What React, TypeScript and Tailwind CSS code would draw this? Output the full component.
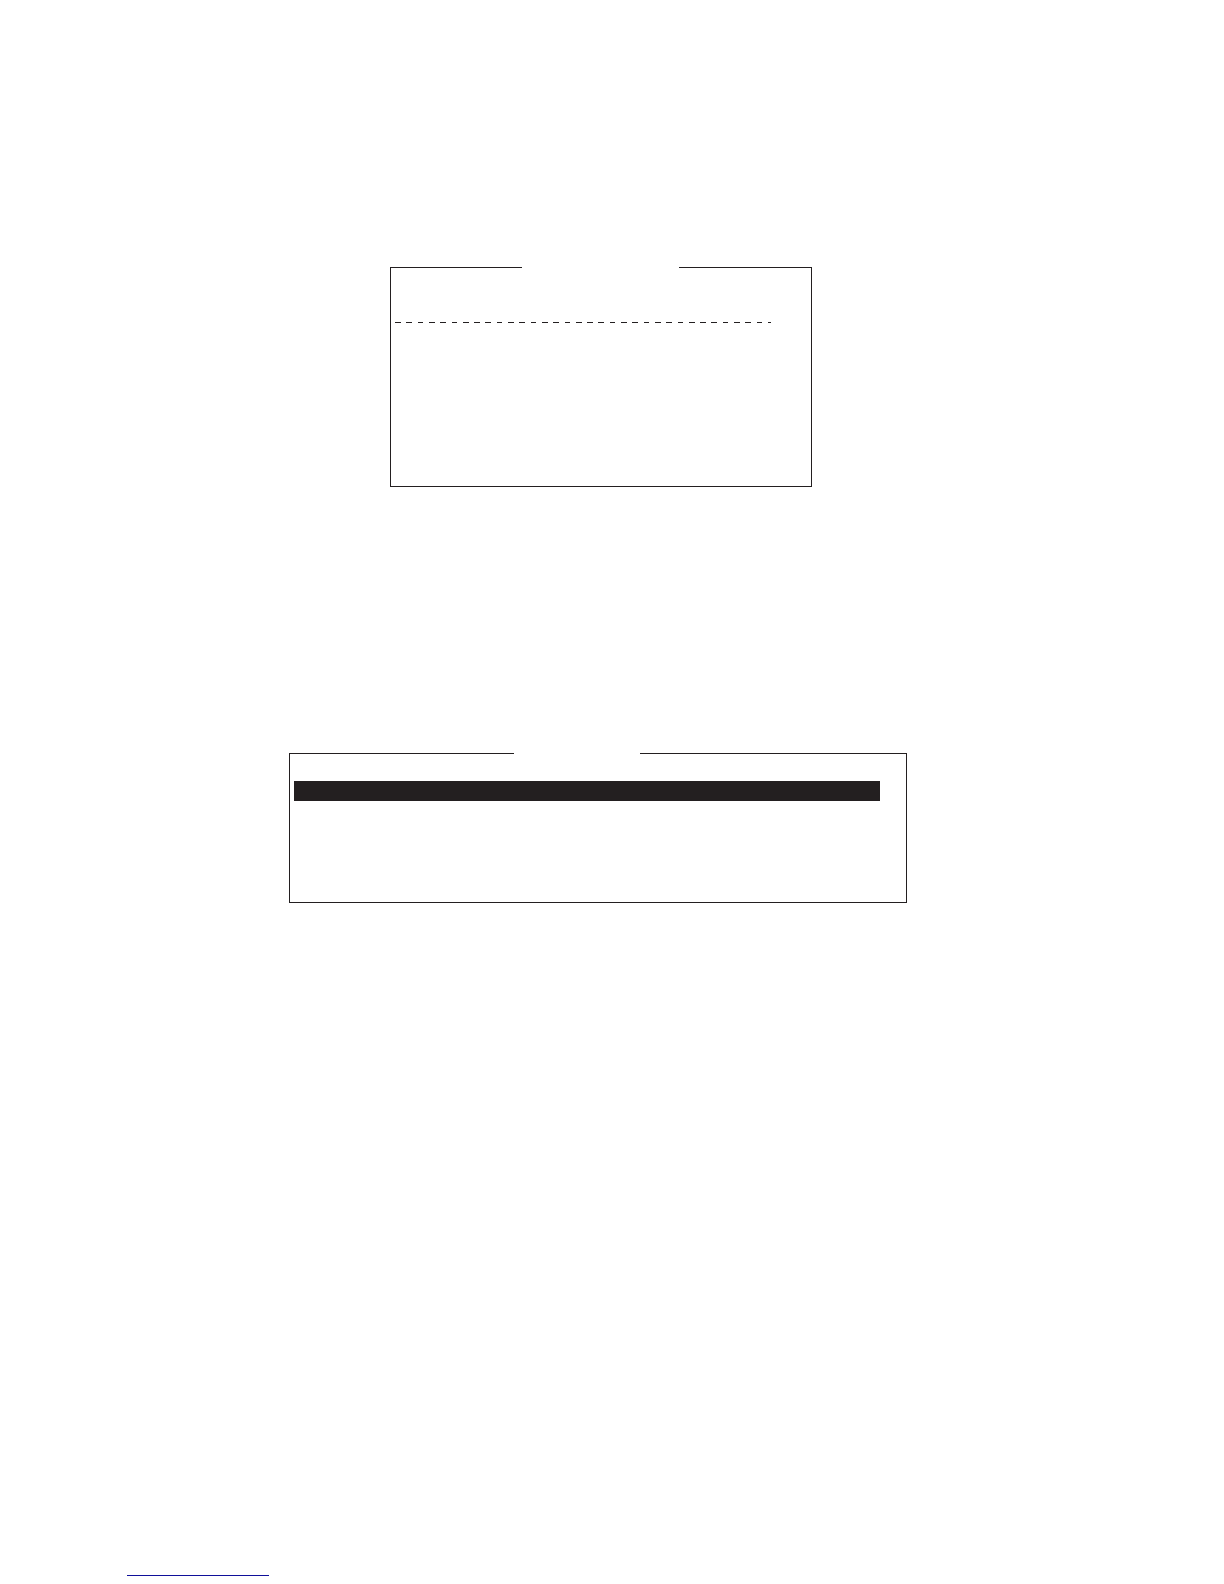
import type { ReactNode } from 'react'

type FrameProps = {
  className: string
  // column tracks of the top edge: line, gap for the title, line
  edgeClassName: string
  children: ReactNode
}

function Frame({ className, edgeClassName, children }: FrameProps) {
  return (
    <section className={className}>
      <div className={edgeClassName}>
        <span className="h-px bg-[#231f20]" />
        <span />
        <span className="h-px bg-[#231f20]" />
      </div>
      <div className="border-x border-b border-[#231f20]">{children}</div>
    </section>
  )
}

function DashedLine() {
  return (
    <svg className="block h-px w-full" aria-hidden="true">
      <line
        x1="0"
        y1="0.5"
        x2="100%"
        y2="0.5"
        stroke="#231f20"
        strokeWidth="1"
        strokeDasharray="5.7 5.6"
        shapeRendering="crispEdges"
      />
    </svg>
  )
}

export default function App() {
  return (
    <main className="flex min-h-screen flex-col bg-white pt-[267px] pb-2">
      <Frame
        className="mr-[412px] ml-[390px]"
        edgeClassName="grid grid-cols-[132fr_157fr_133fr]"
      >
        <div className="pt-[54px] pr-10 pb-[163px] pl-1">
          <DashedLine />
        </div>
      </Frame>

      <Frame
        className="mt-[266px] mr-[317px] ml-[289px]"
        edgeClassName="grid grid-cols-[225fr_126fr_267fr]"
      >
        <div className="pt-[27px] pr-[26px] pb-[101px] pl-1">
          <div className="h-5 bg-[#231f20]" />
        </div>
      </Frame>

      <footer className="mt-auto pl-[127px]">
        <div className="h-px w-[142px] bg-[#10109a]" />
      </footer>
    </main>
  )
}
